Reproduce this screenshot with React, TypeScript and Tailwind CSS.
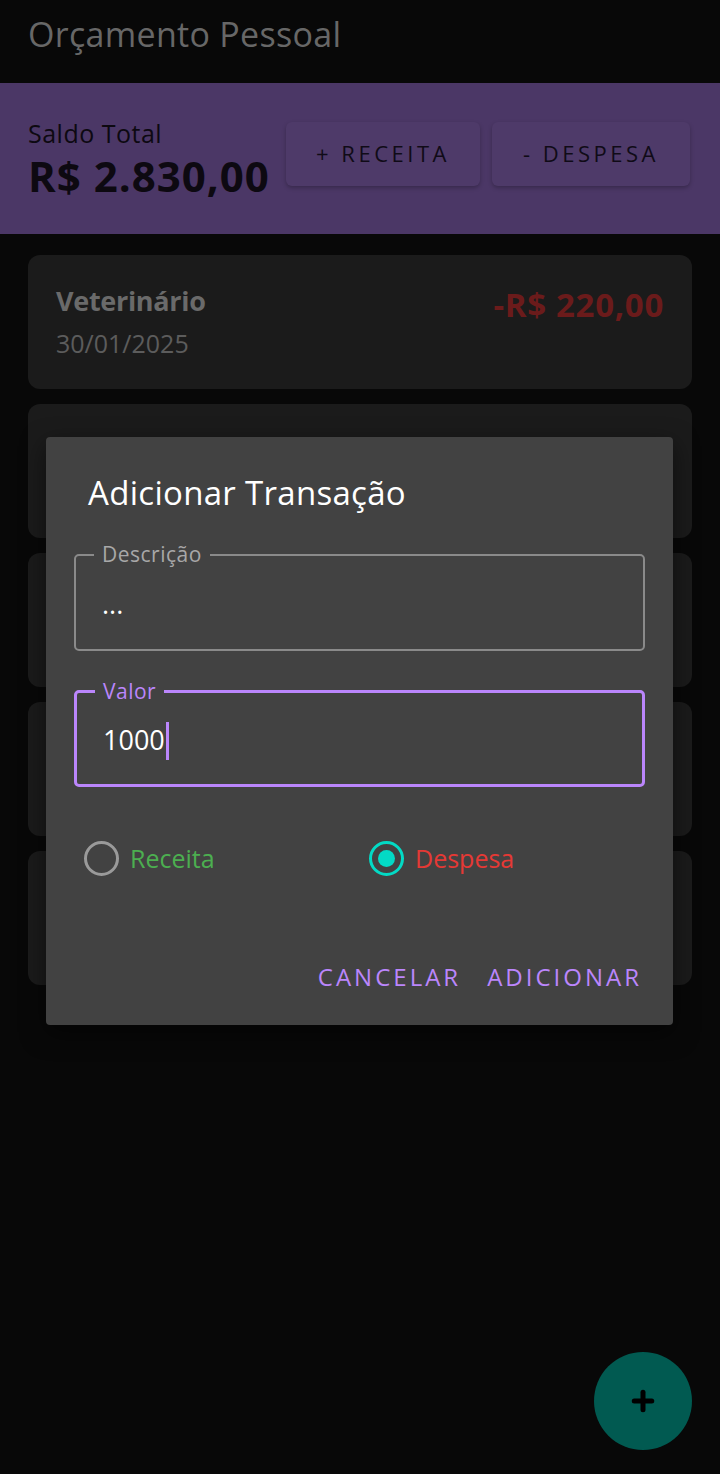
import { Plus } from "lucide-react";

const font = { fontFamily: '"Open Sans", "Noto Sans", sans-serif' };

interface Transacao {
    descricao: string;
    data: string;
    valor: string;
}

const transacoes: Transacao[] = [
    { descricao: "Veterinário", data: "30/01/2025", valor: "-R$ 220,00" },
    { descricao: "", data: "", valor: "" },
    { descricao: "", data: "", valor: "" },
    { descricao: "", data: "", valor: "" },
    { descricao: "", data: "", valor: "" },
];

function OutlinedField({ label, value, focused }: { label: string; value: string; focused?: boolean }) {
    return (
        <div
            className={`relative h-[97px] rounded-[5px] ${focused ? "border-[3px] border-[#bb86fc]" : "border-2 border-[#8a8a8a]"}`}
        >
            <span
                className={`absolute -top-[14px] left-[18px] bg-[#424242] px-[8px] text-[21px] leading-[24px] tracking-[0.5px] ${focused ? "text-[#bb86fc]" : "text-[#a8a8a8]"}`}
            >
                {label}
            </span>
            <div className="flex h-full items-center pl-[26px] pt-[4px] text-[27px] text-white">
                {value}
                {focused && <span className="ml-[1px] inline-block h-[38px] w-[3px] bg-[#bb86fc]" />}
            </div>
        </div>
    );
}

export default function App() {
    return (
        <div className="relative h-[1474px] w-[720px] overflow-hidden bg-[#080808]" style={font}>
            {/* topo */}
            <div className="flex h-[83px] items-center px-7 pb-[14px]">
                <h1 className="text-[34px] tracking-[0.3px] text-[#676767]">Orçamento Pessoal</h1>
            </div>

            {/* saldo */}
            <div className="flex h-[151px] items-center bg-[#4b3766] pl-7">
                <div className="flex w-[258px] flex-col gap-[4px]">
                    <span className="text-[25px] leading-[30px] tracking-[0.5px] text-[#0d0911]">Saldo Total</span>
                    <span className="text-[42px] font-bold leading-[48px] tracking-[1px] text-[#0d0911]">R$ 2.830,00</span>
                </div>
                <div className="mb-[10px] flex gap-3">
                    <button className="h-[64px] w-[194px] rounded-[6px] bg-[#4e3a69] text-[22px] tracking-[3.5px] text-[#100b17] shadow-[0_2px_4px_rgba(0,0,0,0.25)]">
                        + RECEITA
                    </button>
                    <button className="h-[64px] w-[198px] rounded-[6px] bg-[#4e3a69] text-[22px] tracking-[3.5px] text-[#100b17] shadow-[0_2px_4px_rgba(0,0,0,0.25)]">
                        - DESPESA
                    </button>
                </div>
            </div>

            {/* lista */}
            <div className="flex flex-col gap-[15px] px-7 pt-[21px]">
                {transacoes.map((t, i) => (
                    <div key={i} className="flex h-[134px] items-start justify-between rounded-[12px] bg-[#1b1b1b] px-7 pt-[28px]">
                        <div className="flex flex-col">
                            <span className="text-[27px] font-bold leading-[36px] tracking-[-0.3px] text-[#6a6a6a]">{t.descricao}</span>
                            <span className="mt-[8px] text-[25px] leading-[32px] text-[#5c5c5c]">{t.data}</span>
                        </div>
                        <span className="pt-[2px] text-[33px] font-bold leading-[40px] tracking-[0.7px] text-[#6b1b1b]">{t.valor}</span>
                    </div>
                ))}
            </div>

            {/* dialogo */}
            <div className="absolute left-[46px] top-[437px] flex h-[588px] w-[627px] flex-col rounded-[4px] bg-[#424242] px-[28px] shadow-[0_8px_24px_rgba(0,0,0,0.5)]">
                <h2 className="pl-[14px] pt-[34px] text-[33px] leading-[44px] tracking-[0.3px] text-white">Adicionar Transação</h2>
                <div className="mt-[39px] flex flex-col gap-[39px]">
                    <OutlinedField label="Descrição" value="..." />
                    <OutlinedField label="Valor" value="1000" focused />
                </div>
                <div className="mt-[53px] flex items-center pl-[10px]">
                    <div className="flex w-[285px] items-center gap-[11px]">
                        <span className="h-[35px] w-[35px] rounded-full border-[3px] border-[#9a9a9a]" />
                        <span className="text-[25px] text-[#4caf50]">Receita</span>
                    </div>
                    <div className="flex items-center gap-[11px]">
                        <span className="flex h-[35px] w-[35px] items-center justify-center rounded-full border-[3px] border-[#03dac5]">
                            <span className="h-[17px] w-[17px] rounded-full bg-[#03dac5]" />
                        </span>
                        <span className="text-[25px] text-[#e53935]">Despesa</span>
                    </div>
                </div>
                <div className="mt-auto mb-[30px] flex justify-end gap-[26px] pr-[3px]">
                    <button className="text-[24px] tracking-[3px] text-[#bb86fc]">CANCELAR</button>
                    <button className="text-[24px] tracking-[3px] text-[#bb86fc]">ADICIONAR</button>
                </div>
            </div>

            {/* fab */}
            <button className="absolute left-[594px] top-[1352px] flex h-[98px] w-[98px] items-center justify-center rounded-full bg-[#015a51]">
                <Plus className="h-[30px] w-[30px] text-black" strokeWidth={4} />
            </button>
        </div>
    );
}
